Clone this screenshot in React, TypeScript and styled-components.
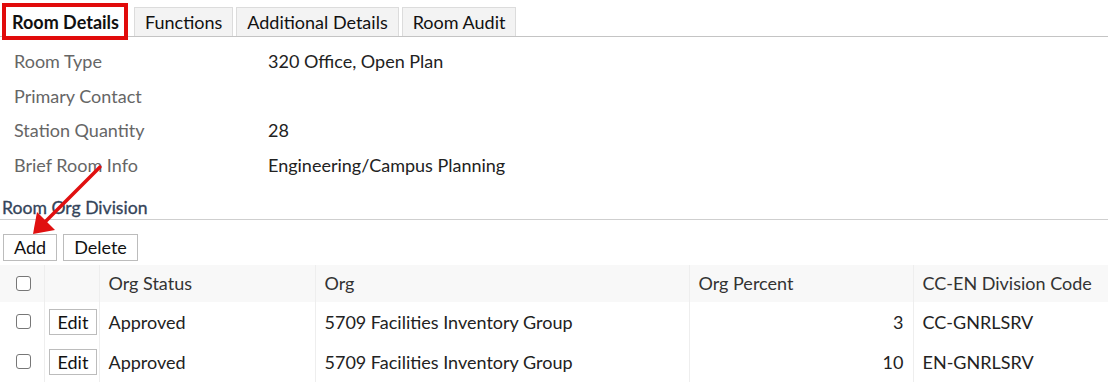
import React from 'react';
import styled, { createGlobalStyle } from 'styled-components';

const GlobalStyle = createGlobalStyle`
  body {
    margin: 0;
    background: #fff;
    font-family: Lato, "Open Sans", Arial, sans-serif;
    color: #222;
  }
`;

const Page = styled.div`
  position: relative;
  width: 1108px;
  height: 386px;
  overflow: hidden;
`;

const TabBar = styled.div`
  display: flex;
  align-items: flex-end;
  gap: 3px;
  height: 37px;
  padding-left: 6px;
  border-bottom: 1px solid #c4c4c4;
  box-sizing: border-box;
`;

const Tab = styled.div<{ $active?: boolean }>`
  height: 29px;
  box-sizing: border-box;
  padding: 0 10px;
  display: flex;
  align-items: center;
  font-size: 18px;
  color: #111;
  background: ${(p) => (p.$active ? '#fff' : '#f3f3f3')};
  border: 1px solid ${(p) => (p.$active ? '#fff' : '#dcdcdc')};
  border-bottom: none;
  ${(p) =>
    p.$active &&
    `
    font-weight: 700;
    padding: 0 4px 0 5px;
    margin-right: 7px;
    outline: 4px solid #e10b0b;
  `}
`;

const Fields = styled.div`
  display: grid;
  grid-template-columns: 254px 1fr;
  grid-auto-rows: 34.5px;
  padding: 7px 0 0 14px;
  font-size: 18px;
  align-items: center;
`;

const Label = styled.div`
  color: #666;
`;

const Value = styled.div`
  color: #222;
`;

const SectionTitle = styled.div`
  margin-top: 13.5px;
  padding: 0 0 0 2px;
  height: 24px;
  line-height: 23px;
  font-size: 17.6px;
  color: #34445a;
  -webkit-text-stroke: 0.3px #34445a;
  border-bottom: 1px solid #cfcfcf;
  box-sizing: border-box;
`;

const Toolbar = styled.div`
  display: flex;
  gap: 6px;
  padding: 14px 0 4px 3px;
`;

const Button = styled.button`
  font-family: inherit;
  font-size: 18px;
  color: #111;
  background: #fff;
  border: 1px solid #bcbcbc;
  height: 27px;
  padding: 0 10px;
  border-radius: 0;
  display: flex;
  align-items: center;
`;

const SmallButton = styled(Button)`
  height: 26px;
  padding: 0 8px;
`;

const Table = styled.table`
  width: 100%;
  table-layout: fixed;
  border-collapse: collapse;
  font-size: 18px;
`;

const HeadCell = styled.th<{ $w?: number }>`
  background: #f8f8f8;
  font-weight: 400;
  text-align: left;
  height: 37px;
  padding: 0 9px;
  color: #333;
  border-left: 1px solid #eee;
  width: ${(p) => (p.$w ? `${p.$w}px` : 'auto')};
  box-sizing: border-box;
  white-space: nowrap;
  &:first-child {
    border-left: none;
  }
`;

const Cell = styled.td<{ $right?: boolean }>`
  height: 40px;
  padding: 0 9px;
  color: #222;
  text-align: ${(p) => (p.$right ? 'right' : 'left')};
  border-left: 1px solid #eee;
  box-sizing: border-box;
  white-space: nowrap;
  &:first-child {
    border-left: none;
  }
`;

const CheckCell = styled(Cell)`
  padding: 0 0 0 16px;
`;

const CheckHead = styled(HeadCell)`
  padding: 0 0 0 16px;
`;

const EditCell = styled(Cell)`
  padding: 0 3px 0 4px;
`;

const Box = styled.span`
  display: block;
  width: 13px;
  height: 13px;
  border: 1px solid #777;
  border-radius: 3px;
  background: #fff;
`;

const Arrow = styled.svg`
  position: absolute;
  left: 0;
  top: 0;
  pointer-events: none;
`;

const rows = [
  { status: 'Approved', org: '5709 Facilities Inventory Group', pct: 3, code: 'CC-GNRLSRV' },
  { status: 'Approved', org: '5709 Facilities Inventory Group', pct: 10, code: 'EN-GNRLSRV' },
];

export default function App() {
  return (
    <Page>
      <GlobalStyle />
      <TabBar>
        <Tab $active>Room Details</Tab>
        <Tab>Functions</Tab>
        <Tab>Additional Details</Tab>
        <Tab>Room Audit</Tab>
      </TabBar>
      <Fields>
        <Label>Room Type</Label>
        <Value>320 Office, Open Plan</Value>
        <Label>Primary Contact</Label>
        <Value />
        <Label>Station Quantity</Label>
        <Value>28</Value>
        <Label>Brief Room Info</Label>
        <Value>Engineering/Campus Planning</Value>
      </Fields>
      <SectionTitle>Room Org Division</SectionTitle>
      <Toolbar>
        <Button>Add</Button>
        <Button>Delete</Button>
      </Toolbar>
      <Table>
        <thead>
          <tr>
            <CheckHead $w={44}>
              <Box />
            </CheckHead>
            <HeadCell $w={55} />
            <HeadCell $w={216}>Org Status</HeadCell>
            <HeadCell $w={374}>Org</HeadCell>
            <HeadCell $w={224}>Org Percent</HeadCell>
            <HeadCell>CC-EN Division Code</HeadCell>
          </tr>
        </thead>
        <tbody>
          {rows.map((r, i) => (
            <tr key={i}>
              <CheckCell>
                <Box />
              </CheckCell>
              <EditCell>
                <SmallButton>Edit</SmallButton>
              </EditCell>
              <Cell>{r.status}</Cell>
              <Cell>{r.org}</Cell>
              <Cell $right>{r.pct}</Cell>
              <Cell>{r.code}</Cell>
            </tr>
          ))}
        </tbody>
      </Table>
      <Arrow width="1108" height="386" viewBox="0 0 1108 386">
        <line x1="100" y1="167" x2="42" y2="225" stroke="#e01010" strokeWidth="3.5" strokeLinecap="round" />
        <polygon points="33,234 37,212 55,230" fill="#e01010" />
      </Arrow>
    </Page>
  );
}
